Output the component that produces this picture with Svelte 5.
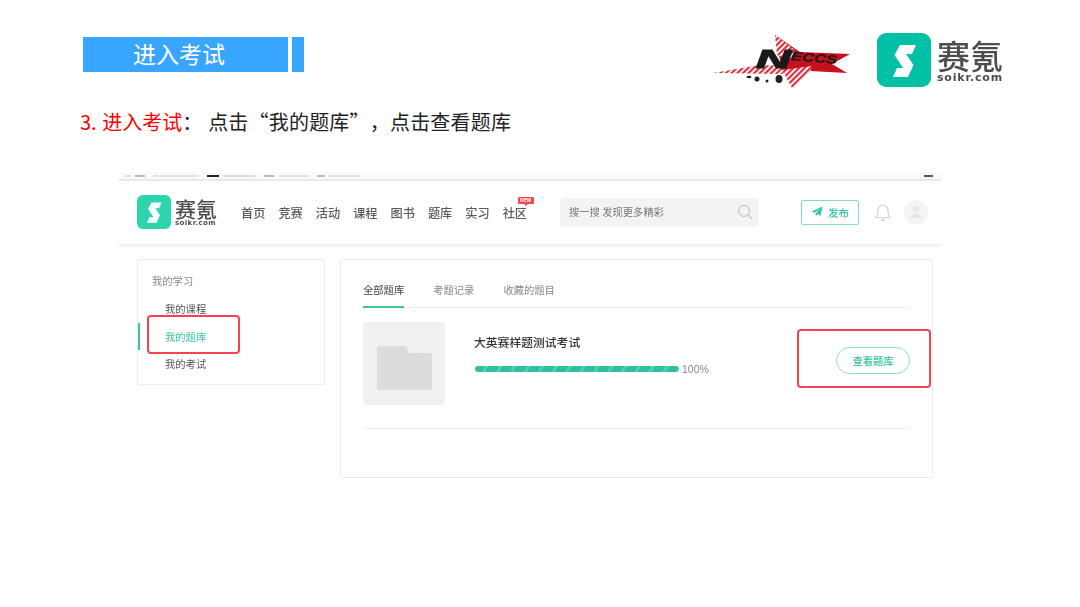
<script>
  const navItems = ['首页', '竞赛', '活动', '课程', '图书', '题库', '实习', '社区'];
  const stripBars = [
    { w: 6, c: '#ddd', m: 4 }, { w: 10, c: '#bbb', m: 8 }, { w: 45, c: '#e4e4e4', m: 9 },
    { w: 12, c: '#222', m: 4 }, { w: 32, c: '#ddd', m: 9 }, { w: 10, c: '#bbb', m: 5 },
    { w: 30, c: '#e4e4e4', m: 8 }, { w: 8, c: '#bbb', m: 3 }, { w: 32, c: '#e4e4e4', m: 0 }
  ];
</script>

<div class="slide">
  <header class="top">
    <div class="banner">
      <div class="banner-main">进入考试</div>
      <div class="banner-tail"></div>
    </div>
    <div class="logos">
      <svg class="neccs" viewBox="700 30 160 65" width="160" height="65" aria-label="NECCS">
        <defs>
          <pattern id="hatch" width="4" height="4" patternUnits="userSpaceOnUse" patternTransform="rotate(45)">
            <rect width="4" height="4" fill="#fff" />
            <rect width="2.2" height="4" fill="#d8313f" />
          </pattern>
        </defs>
        <polygon points="713,73 760,65 790,66 782,74" fill="url(#hatch)" />
        <polygon points="775,35 800,52 850,54 832,64 847,73 810,71 782,70" fill="#c8101e" />
        <polygon points="775,35 795,50 790,60 777,55" fill="url(#hatch)" />
        <polygon points="782,70 812,66 810,72 792,88" fill="url(#hatch)" />
        <ellipse cx="749" cy="77" rx="2.500" ry="1.200" fill="#222" />
        <circle cx="757" cy="79" r="2.500" fill="#222" />
        <circle cx="767" cy="81" r="1.500" fill="#222" />
        <ellipse cx="779" cy="79" rx="3.500" ry="4" fill="#222" />
        <text x="756" y="68" class="n-big" textLength="35" lengthAdjust="spacingAndGlyphs">N</text>
        <text x="791" y="60" class="n-small" textLength="46" lengthAdjust="spacingAndGlyphs" transform="rotate(5 791 60)">ECCS</text>
      </svg>
      <div class="brand brand-lg">
        <svg class="mark" viewBox="0 0 54 54" aria-hidden="true">
          <rect width="54" height="54" rx="9" fill="#00c1a5" />
          <path d="M23 12H39L35 21H29L36.500 32L31 44H16L20 35H26L17.500 22Z" fill="#fff" />
        </svg>
        <div class="brand-text">
          <div class="brand-cn">赛氪</div>
          <div class="brand-en">soikr.com</div>
        </div>
      </div>
    </div>
  </header>

  <p class="step"><span class="red">3. 进入考试</span>：<span class="rest">点击“我的题库”，点击查看题库</span></p>

  <section class="shot">
    <div class="strip">
      {#each stripBars as b}
        <i style="width:{b.w}px;background:{b.c};margin-right:{b.m}px"></i>
      {/each}
      <i class="strip-end"></i>
    </div>

    <nav class="nav">
      <div class="brand brand-sm">
        <svg class="mark" viewBox="0 0 54 54" aria-hidden="true">
          <rect width="54" height="54" rx="9" fill="#2dd4ae" />
          <path d="M23 12H39L35 21H29L36.500 32L31 44H16L20 35H26L17.500 22Z" fill="#fff" />
        </svg>
        <div class="brand-text">
          <div class="brand-cn">赛氪</div>
          <div class="brand-en">soikr.com</div>
        </div>
      </div>
      <ul class="menu">
        {#each navItems as item, i}
          <li>{item}{#if i === navItems.length - 1}<span class="badge">new</span>{/if}</li>
        {/each}
      </ul>
      <div class="search">
        <span>搜一搜 发现更多精彩</span>
        <svg width="16" height="16" viewBox="0 0 16 16" fill="none" stroke="#c9c9c9" stroke-width="1.300">
          <circle cx="7" cy="7" r="5.500" /><path d="M11 11l4 4" />
        </svg>
      </div>
      <button class="publish">
        <svg width="12" height="12" viewBox="0 0 12 12"><path d="M11.500 .5L9.500 10 6.500 8 5 10.500 4.500 7.500 9 3 3.500 6.700 .5 5.500Z" fill="#35c4a5" /></svg>
        发布
      </button>
      <svg class="bell" width="16" height="20" viewBox="0 0 16 20" fill="none" stroke="#cfcfcf" stroke-width="1.200">
        <path d="M1 15.500h14c-1.500-1.500-2-3-2-6.500 0-3-2-6-5-6S3 6 3 9c0 3.500-.5 5-2 6.500Z" /><path d="M6 17.800h4" stroke-width="1.600" />
      </svg>
      <div class="avatar">
        <svg width="14" height="14" viewBox="0 0 14 14" fill="#e8e8e8"><circle cx="7" cy="4" r="3.300" /><path d="M1 13c0-3 2.500-4.500 6-4.500s6 1.500 6 4.500Z" /></svg>
      </div>
    </nav>

    <div class="content">
      <aside class="side">
        <div class="side-title">我的学习</div>
        <div class="side-item">我的课程</div>
        <div class="side-item active">我的题库<span class="mark-box mb-left"></span></div>
        <div class="side-item">我的考试</div>
      </aside>

      <main class="panel">
        <div class="tabs">
          <span class="tab on">全部题库</span>
          <span class="tab">考题记录</span>
          <span class="tab">收藏的题目</span>
        </div>
        <div class="row">
          <div class="thumb">
            <svg width="55" height="44" viewBox="0 0 55 44"><path d="M0 3a3 3 0 0 1 3-3h24a3 3 0 0 1 3 2l2 5h20a3 3 0 0 1 3 3v31a3 3 0 0 1-3 3H3a3 3 0 0 1-3-3Z" fill="#dcdcdc" /></svg>
          </div>
          <div class="info">
            <div class="title">大英赛样题测试考试</div>
            <div class="progress">
              <div class="bar"></div>
              <span>100%</span>
            </div>
          </div>
          <div class="action">
            <button class="view">查看题库</button>
            <span class="mark-box mb-right"></span>
          </div>
        </div>
      </main>
    </div>
  </section>
</div>

<style>
  :global(body) { margin: 0; background: #fff; }
  .slide {
    width: 1080px;
    height: 607px;
    overflow: hidden;
    background: #fff;
    font-family: "Noto Sans CJK SC", "Noto Sans", sans-serif;
    color: #222;
    text-spacing-trim: space-all;
  }
  .top {
    display: flex;
    justify-content: space-between;
    height: 105px;
    padding: 0 77px 0 83px;
  }
  .banner { display: flex; gap: 4px; margin-top: 37px; height: 35px; }
  .banner-main {
    width: 205px;
    background: #38a6ff;
    color: #fff;
    font-size: 23px;
    line-height: 33px;
    padding-left: 50px;
    box-sizing: border-box;
  }
  .banner-tail { width: 12px; background: #38a6ff; }
  .logos { display: flex; margin-top: 30px; height: 65px; }
  .neccs { margin-right: 17px; filter: blur(.4px); }
  .n-big { font: italic 700 26px "Liberation Sans", sans-serif; fill: #1a1a1a; stroke: #1a1a1a; stroke-width: 1.200px; }
  .n-small { font: italic 700 12px "Liberation Sans", sans-serif; fill: #1a1a1a; stroke: #1a1a1a; stroke-width: .3px; }
  .brand { display: flex; filter: blur(.3px); }
  .brand-lg { margin-top: 3px; gap: 6px; }
  .brand-lg .mark { width: 54px; height: 54px; }
  .brand-text { color: #4d4d4d; }
  .brand-cn { white-space: nowrap; font-weight: 500; }
  .brand-lg .brand-cn { font-size: 33px; line-height: 34px; margin-top: 5px; }
  .brand-en { font-family: "DejaVu Sans", sans-serif; font-weight: 700; }
  .brand-lg .brand-en { font-size: 11px; line-height: 11px; letter-spacing: .8px; }

  .step {
    margin: 0;
    padding-left: 80px;
    height: 35px;
    font-size: 20px;
    line-height: 33px;
    white-space: nowrap;
    word-spacing: 1px;
  }
  .red { color: #f00; }
  .rest { margin-left: 6px; letter-spacing: .2px; }

  .shot {
    width: 822px;
    margin: 32px 0 0 119px;
    filter: blur(.5px);
  }
  .strip {
    height: 7px;
    background: #fafafa;
    border-bottom: 2px solid #e9e9e9;
    display: flex;
    align-items: center;
    padding-left: 6px;
  }
  .strip i { height: 2px; display: block; }
  .strip-end { width: 9px; background: #555; margin-left: auto; margin-right: 8px; }
  .nav {
    height: 62px;
    padding: 0 0 1px 18px;
    display: flex;
    align-items: center;
    border-bottom: 2px solid #f0f0f0;
    box-shadow: 0 2px 3px rgba(0,0,0,.03);
  }
  .brand-sm { gap: 4px; align-items: center; width: 104px; flex: none; }
  .brand-sm .mark { width: 34px; height: 34px; }
  .brand-sm .brand-cn { font-size: 21px; line-height: 21px; }
  .brand-sm .brand-en { font-size: 7px; line-height: 8px; letter-spacing: .4px; }
  .menu {
    list-style: none;
    display: flex;
    gap: 13px;
    margin: 0;
    padding: 2px 0 0;
    flex: none;
    font-size: 12.200px;
    color: #5a5a5a;
    font-weight: 500;
  }
  .menu li { position: relative; line-height: 16px; white-space: nowrap; }
  .badge {
    position: absolute;
    left: 15px;
    top: -8px;
    width: 16px;
    height: 7px;
    background: #f04848;
    border-radius: 1px;
    color: #fff;
    font-size: 5.500px;
    line-height: 7px;
    text-align: center;
    font-weight: 700;
  }
  .badge::after {
    content: "";
    position: absolute;
    left: 6px;
    top: 7px;
    border: 2px solid transparent;
    border-top-color: #f04848;
    border-bottom-width: 0;
  }
  .search {
    margin-left: 33px;
    width: 199px;
    height: 29px;
    flex: none;
    box-sizing: border-box;
    background: #f2f3f5;
    border-radius: 4px;
    padding: 0 6px 1px 9px;
    display: flex;
    align-items: center;
    justify-content: space-between;
    font-size: 10.300px;
    color: #777;
    white-space: nowrap;
  }
  .publish {
    margin: 0 0 0 42px;
    width: 58px;
    height: 25px;
    flex: none;
    border: 1px solid #7fdcc8;
    border-radius: 2px;
    background: #fff;
    color: #35c4a5;
    font: 500 10.500px "Noto Sans CJK SC", sans-serif;
    display: flex;
    align-items: center;
    justify-content: center;
    gap: 5px;
    padding: 0;
  }
  .bell { margin-left: 16px; flex: none; }
  .avatar {
    margin-left: 13px;
    width: 24px;
    height: 24px;
    border-radius: 50%;
    background: #f4f4f4;
    display: flex;
    align-items: center;
    justify-content: center;
    flex: none;
  }

  .content {
    display: flex;
    align-items: flex-start;
    gap: 15px;
    padding: 13px 0 0 18px;
  }
  .side {
    width: 188px;
    height: 126px;
    flex: none;
    box-sizing: border-box;
    border: 1px solid #e6f0f2;
    border-radius: 2px;
    padding: 13px 0 0;
  }
  .side-title { font-size: 10.300px; line-height: 15px; color: #888; padding-left: 14px; margin-bottom: 7px; }
  .side-item {
    position: relative;
    height: 27.500px;
    line-height: 27.500px;
    font-size: 10.300px;
    color: #555;
    padding-left: 27px;
  }
  .side-item.active { color: #3bc4a5; border-left: 2px solid #3bc4a5; padding-left: 25px; }
  .mark-box {
    position: absolute;
    border: 2px solid #f5434f;
    border-radius: 4px;
    box-sizing: border-box;
    pointer-events: none;
  }
  .mb-left { left: 7px; top: -8px; width: 93px; height: 39px; }
  .panel {
    width: 593px;
    height: 219px;
    flex: none;
    box-sizing: border-box;
    border: 1px solid #e6f0f2;
    border-radius: 2px;
    padding: 0 22px;
  }
  .tabs {
    display: flex;
    gap: 29px;
    height: 48px;
    box-sizing: border-box;
    align-items: flex-end;
    border-bottom: 1px solid #eee;
    font-size: 10.300px;
    color: #888;
  }
  .tab { line-height: 15px; padding-bottom: 9px; margin-bottom: -1px; border-bottom: 2px solid transparent; }
  .tab.on { color: #444; border-bottom-color: #3bc4a5; }
  .row {
    display: flex;
    height: 121px;
    box-sizing: border-box;
    padding-top: 14px;
    border-bottom: 1px solid #eee;
  }
  .thumb {
    width: 82px;
    height: 83px;
    flex: none;
    background: #f0f0f0;
    border-radius: 4px;
    display: flex;
    align-items: center;
    justify-content: center;
    padding-top: 9px;
    box-sizing: border-box;
  }
  .info { margin-left: 29px; padding-top: 11px; width: 240px; flex: none; }
  .title { font-size: 11.800px; line-height: 18px; color: #333; font-weight: 500; white-space: nowrap; }
  .progress { display: flex; align-items: center; gap: 3px; margin-top: 12px; margin-left: 1px; font-size: 10.500px; color: #888; font-family: "Liberation Sans", sans-serif; }
  .bar {
    width: 204px;
    height: 6px;
    flex: none;
    border-radius: 3px;
    background: repeating-linear-gradient(120deg, #2fbfa0 0 9px, #55cdb3 9px 12px);
  }
  .action { position: relative; flex: 1; display: flex; justify-content: flex-end; align-items: flex-start; }
  .view {
    margin: 25px 0 0;
    width: 74px;
    height: 27px;
    border: 1px solid #8ddccb;
    border-radius: 14px;
    background: #fff;
    color: #3bc4a5;
    font: 500 10.300px "Noto Sans CJK SC", sans-serif;
    padding: 0;
  }
  .mb-right { right: -21px; top: 7px; width: 134px; height: 59px; }
</style>
